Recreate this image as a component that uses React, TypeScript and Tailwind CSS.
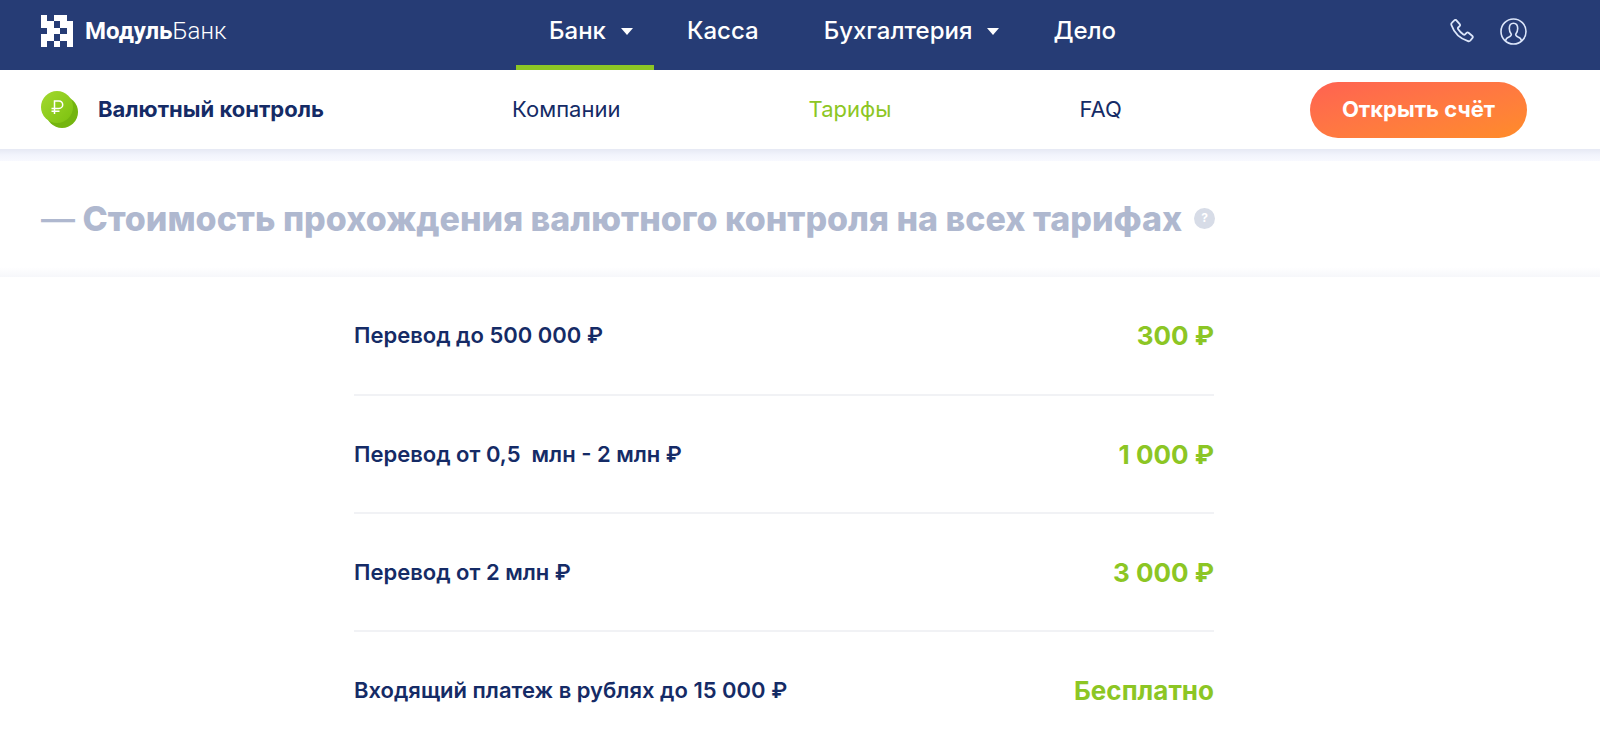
import type { ReactNode } from "react";

const mainMenu = [
  { title: "Банк", dropdown: true, active: true },
  { title: "Касса", dropdown: false, active: false },
  { title: "Бухгалтерия", dropdown: true, active: false },
  { title: "Дело", dropdown: false, active: false },
];

const tariffs = [
  { name: "Перевод до 500 000 ₽", price: "300 ₽" },
  { name: "Перевод от 0,5\u00a0 млн - 2 млн ₽", price: "1 000 ₽" },
  { name: "Перевод от 2 млн ₽", price: "3 000 ₽" },
  { name: "Входящий платеж в рублях до 15 000 ₽", price: "Бесплатно" },
];

const logoRows = ["10110", "11011", "01101", "11011", "10101"];

function LogoMark() {
  return (
    <svg viewBox="0 0 5 5" className="size-8 shrink-0" fill="#fff" shapeRendering="crispEdges" aria-hidden="true">
      {logoRows.map((row, y) =>
        row.split("").map((cell, x) =>
          cell === "1" ? <rect key={`${x}-${y}`} x={x} y={y} width="1" height="1" /> : null
        )
      )}
    </svg>
  );
}

function CoinIcon() {
  return (
    <svg viewBox="0 0 37 37" className="size-[37px] shrink-0" aria-hidden="true">
      <defs>
        <linearGradient id="coin" x1="0" y1="0" x2="1" y2="1">
          <stop offset="0" stopColor="#a3d92f" />
          <stop offset="1" stopColor="#7cc10f" />
        </linearGradient>
      </defs>
      <circle cx="21" cy="21" r="16" fill="#74b50f" />
      <circle cx="16" cy="16" r="16" fill="url(#coin)" />
      <path d="M13.500 23V10h4.500a3.700 3.700 0 0 1 0 7.400h-7.500M10.500 20.300h8" fill="none" stroke="#fff" strokeWidth="1.5" />
    </svg>
  );
}

function PhoneIcon() {
  return (
    <svg viewBox="0 0 24 24" className="size-6" fill="none" stroke="#dce6fa" strokeWidth="1.8" strokeLinejoin="round" aria-hidden="true">
      <path d="M2 3.6 4.6 1.2a1.3 1.3 0 0 1 1.8.1l3.3 3.9a1.4 1.4 0 0 1-.1 1.9L8.2 8.5c-.5.5-.4 1.2 0 1.8 1.3 2 3 3.7 5.2 5.2.6.4 1.2.4 1.7-.1l1.5-1.5a1.4 1.4 0 0 1 1.9-.1l3.9 3.2c.6.5.6 1.3.1 1.9l-2.1 2.600c-.6.7-1.5.9-2.4.6C9.8 19.5 4.2 14 1.4 6c-.3-.9-.1-1.8.6-2.4Z" />
    </svg>
  );
}

function UserIcon() {
  return (
    <svg viewBox="0 0 27 27" className="size-[27px]" fill="none" stroke="#dce6fa" strokeWidth="1.6" aria-hidden="true">
      <circle cx="13.5" cy="13.5" r="12.5" />
      <path d="M5.5 23c.3-2.6 1.5-3.4 3.5-4.1 1.6-.6 2.5-1.3 2.3-2.7-1.4-1.6-2-3.5-2-5.7 0-3.2 1.5-5.3 4.2-5.3s4.2 2.1 4.2 5.3c0 2.2-.6 4.1-2 5.7-.2 1.4.7 2.1 2.3 2.7 2 .7 3.2 1.5 3.5 4.1" />
    </svg>
  );
}

function TopLink({ active, dropdown, children }: { active: boolean; dropdown: boolean; children: ReactNode }) {
  return (
    <a
      href="#"
      className={`relative flex h-full items-center gap-3.5 pb-2 pl-[33px] ${dropdown ? "pr-5" : "pr-8"}`}
    >
      {children}
      {dropdown && (
        <svg viewBox="0 0 14 7" className="h-[7px] w-3.5" fill="#fff" aria-hidden="true">
          <path d="M1 0h12L7 7z" />
        </svg>
      )}
      {active && <span className="absolute inset-x-0 bottom-0 h-[5px] bg-[#8cc624]" />}
    </a>
  );
}

export default function App() {
  return (
    <div className="bg-white font-['Inter','Open_Sans',sans-serif] text-[#152b66]">
      <header className="flex h-[70px] items-stretch bg-[#263c75] pr-[73px] pl-[41px] text-white">
        <a href="#" className="flex w-[475px] items-center gap-3 pb-2 font-['Roboto',sans-serif] text-2xl">
          <LogoMark />
          <span>
            <span className="font-bold">Модуль</span>
            <span className="font-light">Банк</span>
          </span>
        </a>
        <nav className="flex text-2xl font-medium">
          {mainMenu.map((item) => (
            <TopLink key={item.title} active={item.active} dropdown={item.dropdown}>
              {item.title}
            </TopLink>
          ))}
        </nav>
        <div className="ml-auto flex items-center gap-[26px] pb-2">
          <a href="#" aria-label="Позвонить"><PhoneIcon /></a>
          <a href="#" aria-label="Личный кабинет"><UserIcon /></a>
        </div>
      </header>

      <nav className="flex h-[79px] items-center justify-between pr-[73px] pl-[41px] text-[22px]">
        <a href="#" className="flex items-center gap-5 font-bold">
          <CoinIcon />
          Валютный контроль
        </a>
        <a href="#">Компании</a>
        <a href="#" className="text-[#8cc624]">Тарифы</a>
        <a href="#">FAQ</a>
        <button
          type="button"
          className="h-14 rounded-full bg-linear-165 from-[#ff6251] to-[#ff8c28] px-8 font-bold text-white"
        >
          Открыть счёт
        </button>
      </nav>
      <div className="h-3 bg-linear-to-b from-[#e6e9f4] via-[#f2f4fc] to-[#f8f9ff]" />

      <main>
        <div className="flex h-[106px] items-center gap-3 pt-2 pl-[41px]">
          <h1 className="text-[34px] font-extrabold text-[#afb8cf]">
            <span className="font-medium">—</span> Стоимость прохождения валютного контроля на всех тарифах
          </h1>
          <button
            type="button"
            aria-label="Подсказка"
            className="size-[21px] rounded-full bg-[#d7dce7] text-xs font-bold text-white"
          >
            ?
          </button>
        </div>
        <div className="h-2.5 bg-linear-to-b from-white to-[#f6f7fa]" />

        <table className="mr-auto ml-[354px] w-[860px] border-collapse">
          <tbody>
            {tariffs.map((row) => (
              <tr key={row.name} className="h-[118px] border-b-2 border-[#f1f2f5] last:border-0">
                <th scope="row" className="text-left text-[22px] font-semibold">{row.name}</th>
                <td className="text-right text-[26px] font-bold text-[#8cc624]">{row.price}</td>
              </tr>
            ))}
          </tbody>
        </table>
      </main>
    </div>
  );
}
